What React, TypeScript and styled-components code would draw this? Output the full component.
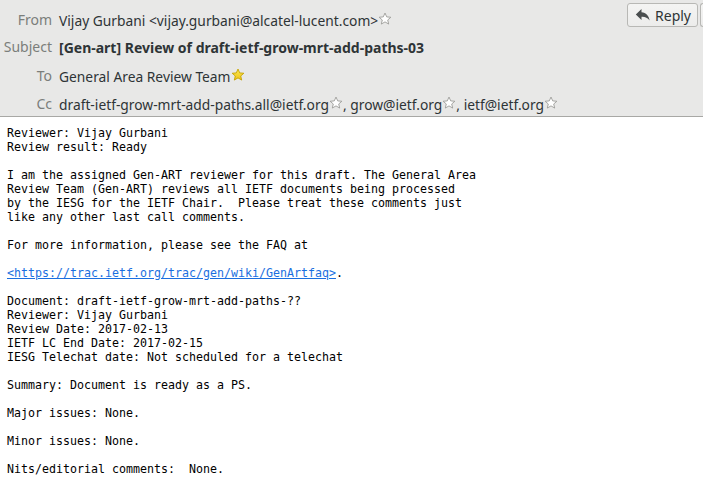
import React from 'react'
import styled, { createGlobalStyle } from 'styled-components'

const GlobalStyle = createGlobalStyle`
  html, body {
    margin: 0;
    padding: 0;
    background: #ffffff;
  }
`

const Page = styled.div`
  width: 703px;
  height: 501px;
  overflow: hidden;
  background: #ffffff;
`

const Header = styled.div`
  position: relative;
  display: flex;
  height: 116px;
  background: #e8e8e7;
  border-bottom: 1px solid #a8a8a5;
  font-family: 'Noto Sans', 'Open Sans', sans-serif;
  font-size: 13.8px;
  color: #2e3436;
`

const Fields = styled.div`
  display: grid;
  grid-template-columns: 52px auto;
  column-gap: 7px;
  align-content: start;
  padding-top: 8px;
`

const Label = styled.div<{ $top?: number }>`
  text-align: right;
  color: #7b7e7b;
  font-size: 14px;
  height: ${(p) => p.$top ?? 28}px;
  line-height: 24px;
`

const Value = styled.div<{ $bold?: boolean }>`
  display: flex;
  align-items: center;
  height: 24px;
  font-weight: ${(p) => (p.$bold ? 700 : 400)};
  font-size: ${(p) => (p.$bold ? '14px' : '13.8px')};
  white-space: nowrap;
`

const Actions = styled.div`
  position: absolute;
  top: 3px;
  right: 0;
  display: flex;
  gap: 2px;
`

const Button = styled.div`
  display: flex;
  align-items: center;
  gap: 4px;
  height: 22px;
  padding: 0 6px 0 7px;
  border: 1px solid #b8b8b5;
  border-radius: 3px;
  background: linear-gradient(#f4f4f3, #ececeb);
  font-size: 14px;
  color: #2e3436;
`

const ButtonStub = styled(Button)`
  width: 2px;
  padding: 0;
  border-right: none;
  border-radius: 3px 0 0 3px;
`

const Body = styled.pre`
  margin: 0;
  padding: 9px 7px 7px;
  font-family: 'DejaVu Sans Mono', monospace;
  font-size: 11.63px;
  line-height: 14px;
  color: #000000;
`

const Link = styled.a`
  color: #1a6fe0;
  text-decoration: underline;
`

const Star = ({ filled }: { filled?: boolean }) => (
  <svg width="14" height="14" viewBox="0 0 16 16" style={{ marginBottom: 3 }}>
    <defs>
      <linearGradient id="gold" x1="0" y1="0" x2="0" y2="1">
        <stop offset="0" stopColor="#fce94f" />
        <stop offset="1" stopColor="#edc21a" />
      </linearGradient>
    </defs>
    <path
      d="M8 1.2 L9.95 5.6 L14.7 6 L11.1 9.1 L12.2 13.8 L8 11.3 L3.8 13.8 L4.9 9.1 L1.3 6 L6.05 5.6 Z"
      fill={filled ? 'url(#gold)' : '#ffffff'}
      stroke={filled ? '#c4a000' : '#9a9a97'}
      strokeWidth="1"
      strokeLinejoin="round"
    />
  </svg>
)

const ReplyIcon = () => (
  <svg width="16" height="14" viewBox="0 0 16 14">
    <path d="M6.5 1 L0.8 6.5 L6.5 12 L6.5 8.8 C10 8.6 12.5 9.6 14.6 12.6 C14 8 11 4.6 6.5 4.3 Z" fill="#4a4e4f" />
  </svg>
)

export default function App() {
  return (
    <Page>
      <GlobalStyle />
      <Header>
        <Fields>
          <Label $top={27}>From</Label>
          <Value>
            Vijay Gurbani &lt;vijay.gurbani@alcatel-lucent.com&gt;
            <Star />
          </Value>
          <Label $top={29}>Subject</Label>
          <Value $bold>[Gen-art] Review of draft-ietf-grow-mrt-add-paths-03</Value>
          <Label>To</Label>
          <Value>
            General Area Review Team
            <Star filled />
          </Value>
          <Label>Cc</Label>
          <Value>
            draft-ietf-grow-mrt-add-paths.all@ietf.org
            <Star />, grow@ietf.org
            <Star />, ietf@ietf.org
            <Star />
          </Value>
        </Fields>
        <Actions>
          <Button>
            <ReplyIcon />
            Reply
          </Button>
          <ButtonStub />
        </Actions>
      </Header>
      <Body>
        {`Reviewer: Vijay Gurbani
Review result: Ready

I am the assigned Gen-ART reviewer for this draft. The General Area
Review Team (Gen-ART) reviews all IETF documents being processed
by the IESG for the IETF Chair.  Please treat these comments just
like any other last call comments.

For more information, please see the FAQ at

`}
        <Link href="#">&lt;https://trac.ietf.org/trac/gen/wiki/GenArtfaq&gt;</Link>
        {`.

Document: draft-ietf-grow-mrt-add-paths-??
Reviewer: Vijay Gurbani
Review Date: 2017-02-13
IETF LC End Date: 2017-02-15
IESG Telechat date: Not scheduled for a telechat

Summary: Document is ready as a PS.

Major issues: None.

Minor issues: None.

Nits/editorial comments:  None.`}
      </Body>
    </Page>
  )
}
